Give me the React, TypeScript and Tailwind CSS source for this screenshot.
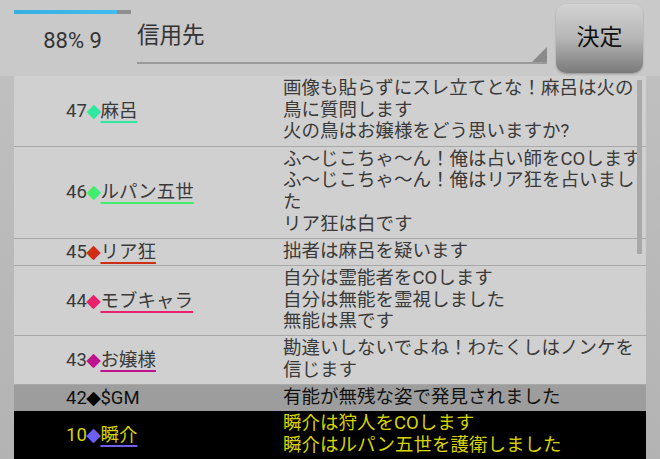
import React from "react";

type Row = {
  no: number;
  mark: string;
  name: string;
  lines: string[];
  kind?: "normal" | "gm" | "self";
};

const rows: Row[] = [
  {
    no: 47,
    mark: "#2ee8a0",
    name: "麻呂",
    lines: ["画像も貼らずにスレ立てとな！麻呂は火の", "鳥に質問します", "火の鳥はお嬢様をどう思いますか?"],
  },
  {
    no: 46,
    mark: "#40ee6c",
    name: "ルパン五世",
    lines: [
      "ふ～じこちゃ～ん！俺は占い師をCOします",
      "ふ～じこちゃ～ん！俺はリア狂を占いまし",
      "た",
      "リア狂は白です",
    ],
  },
  { no: 45, mark: "#cf2e12", name: "リア狂", lines: ["拙者は麻呂を疑います"] },
  {
    no: 44,
    mark: "#e8216a",
    name: "モブキャラ",
    lines: ["自分は霊能者をCOします", "自分は無能を霊視しました", "無能は黒です"],
  },
  {
    no: 43,
    mark: "#c0128c",
    name: "お嬢様",
    lines: ["勘違いしないでよね！わたくしはノンケを", "信じます"],
  },
  { no: 42, mark: "#000000", name: "$GM", lines: ["有能が無残な姿で発見されました"], kind: "gm" },
  {
    no: 10,
    mark: "#6e5ef4",
    name: "瞬介",
    lines: ["瞬介は狩人をCOします", "瞬介はルパン五世を護衛しました"],
    kind: "self",
  },
];

const font = { fontFamily: "Roboto, 'Noto Sans CJK JP', sans-serif" };

function LogRow({ row }: { row: Row }) {
  const kind = row.kind ?? "normal";
  const rowCls =
    kind === "gm"
      ? "bg-[#9d9d9d] text-[#111111]"
      : kind === "self"
        ? "bg-black text-[#d6d400]"
        : "border-b border-[#a8a8a8] text-[#3a3a3a]";

  return (
    <div className={`flex ${rowCls}`}>
      <div className="w-[269px] shrink-0 flex items-center pl-[52px] text-[18.5px] leading-[22px]">
        <span>{row.no}</span>
        <span
          className="text-[19px] leading-[22px] -mx-[0.5px] -translate-y-[1px]"
          style={{ color: row.mark, fontFamily: "'DejaVu Sans', sans-serif" }}
        >
          ◆
        </span>
        {kind === "gm" ? (
          <span>{row.name}</span>
        ) : (
          <span
            className="underline decoration-[2px] underline-offset-[4px]"
            style={{ textDecorationColor: row.mark }}
          >
            {row.name}
          </span>
        )}
      </div>
      <div className="flex-1 pt-[2px] pb-[2.5px] text-[18.5px] leading-[21.67px]">
        {row.lines.map((l, i) => (
          <div key={i} className="whitespace-nowrap">
            {l}
          </div>
        ))}
      </div>
    </div>
  );
}

export default function App() {
  return (
    <div className="w-[660px] h-[459px] overflow-hidden flex flex-col bg-[#c9c9c9]" style={font}>
      {/* top bar */}
      <div className="h-[76px] shrink-0 flex items-start">
        <div className="ml-[14px] w-[117px] shrink-0 flex flex-col">
          <div className="mt-[10px] h-[4px] flex bg-[#8e8e8e]">
            <div className="w-[103px] bg-gradient-to-r from-[#33b0e0] to-[#40bdf0]" />
          </div>
          <div className="mt-[14.5px] text-center text-[22px] leading-[24px] text-[#333333]">88% 9</div>
        </div>

        <div className="ml-[6px] w-[410px] h-[64px] flex items-end border-b-2 border-[#9a9a9a]">
          <div className="flex-1 self-start mt-[20px] text-[22.5px] leading-[30px] text-[#333333]">信用先</div>
          <svg width="15" height="15" viewBox="0 0 15 15">
            <polygon points="15,0 15,15 0,15" fill="#8a8a8a" />
          </svg>
        </div>

        <button className="ml-[9px] mt-[4px] w-[87px] h-[69px] rounded-[10px] bg-gradient-to-b from-[#d2d2d2] via-[#b6b6b6] to-[#7a7a7a] shadow-[0_1px_2px_rgba(0,0,0,0.25)] text-[23px] text-[#111111] flex items-center justify-center">
          決定
        </button>
      </div>

      {/* log list */}
      <div className="flex-1 px-[14px] bg-gradient-to-b from-[#bfbfbf] to-[#b3b3b3] overflow-hidden">
        <div className="relative h-full bg-[#d0d0d0] overflow-hidden">
          {rows.map((r) => (
            <LogRow key={r.no} row={r} />
          ))}
          <div className="absolute right-[4px] top-[4px] w-[5px] h-[174px] bg-[#a9a9a9]" />
        </div>
      </div>
    </div>
  );
}
